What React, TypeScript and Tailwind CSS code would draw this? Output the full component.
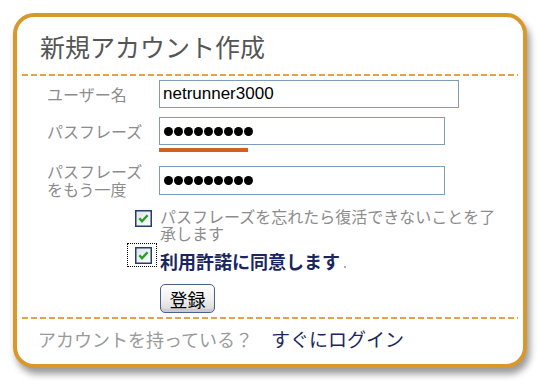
import React from "react";

const Check: React.FC = () => (
  <svg width="17" height="17" viewBox="0 0 17 17" className="block">
    <defs>
      <linearGradient id="cbg" x1="0" y1="0" x2="1" y2="1">
        <stop offset="0" stopColor="#dfe3e8" />
        <stop offset="1" stopColor="#ffffff" />
      </linearGradient>
    </defs>
    <rect x="0.75" y="0.75" width="15.5" height="15.5" fill="url(#cbg)" stroke="#1f3f70" strokeWidth="1.5" />
    <path d="M4.3 8.2 L7 11.2 L12.6 5.2" stroke="#23a127" strokeWidth="2.4" fill="none" />
  </svg>
);

const Dots: React.FC = () => (
  <div className="flex items-center gap-[1px] pl-[4px]">
    {Array.from({ length: 9 }).map((_, i) => (
      <span key={i} className="block w-[9px] h-[9px] rounded-full bg-black" />
    ))}
  </div>
);

const Dash: React.FC = () => (
  <div className="mx-[5px] h-[2px] bg-[repeating-linear-gradient(90deg,#e3a445_0_6px,transparent_6px_9px)]" />
);

const App: React.FC = () => {
  return (
    <div className="w-[540px] h-[387px] bg-white pl-[13px] pt-[13px] font-[Noto_Sans_CJK_JP,sans-serif]">
      <div className="w-[514px] h-[355px] border-4 border-[#d9982c] rounded-[21px] bg-white shadow-[3px_6px_7px_rgba(0,0,0,0.4)] flex flex-col">
        {/* title */}
        <div className="h-[57px] pl-[23px] pt-[12px] text-[25px] leading-[34px] text-[#555]">
          新規アカウント作成
        </div>
        <Dash />

        {/* user name */}
        <div className="mt-[4px] flex items-center">
          <div className="w-[142px] pl-[30px] text-[16px] leading-[18px] text-[#8c8c8c]">ユーザー名</div>
          <div className="w-[300px] h-[28px] border border-[#7f9db9] flex items-center pl-[3px] font-[Liberation_Sans,Arial,sans-serif] text-[17px] text-black">
            netrunner3000
          </div>
        </div>

        {/* passphrase */}
        <div className="mt-[9px] flex items-center">
          <div className="w-[142px] pl-[30px] text-[16px] leading-[18px] text-[#8c8c8c]">パスフレーズ</div>
          <div className="w-[286px] h-[28px] border border-[#7f9db9] flex items-center">
            <Dots />
          </div>
        </div>
        <div className="ml-[142px] mt-[3px] w-[89px] h-[4px] bg-[#d2601e]" />

        {/* passphrase again */}
        <div className="mt-[10px] flex items-center">
          <div className="w-[142px] pl-[30px] text-[16px] leading-[18px] text-[#8c8c8c]">
            パスフレーズ
            <br />
            をもう一度
          </div>
          <div className="w-[286px] h-[29px] border border-[#7f9db9] flex items-center">
            <Dots />
          </div>
        </div>

        {/* acknowledge */}
        <div className="mt-[10px] flex items-start">
          <div className="ml-[118px] mt-[2px]">
            <Check />
          </div>
          <div className="ml-[8px] w-[345px] text-[16px] leading-[17px] text-[#8c8c8c]">
            パスフレーズを忘れたら復活できないことを了承します
          </div>
        </div>

        {/* license */}
        <div className="mt-[1px] flex items-start">
          <div className="ml-[110px] w-[30px] h-[24px] border border-dotted border-black flex items-center pl-[7px]">
            <Check />
          </div>
          <div className="ml-[3px] mt-[6px] text-[18px] leading-[24px] font-bold text-[#1b2660] flex items-end">
            利用許諾に同意します
            <span className="ml-[4px] mb-[5px] block w-[2px] h-[2px] bg-[#b0b0b0]" />
          </div>
        </div>

        {/* submit */}
        <div className="mt-[11px] ml-[143px]">
          <button className="w-[55px] h-[29px] rounded-[5px] border border-[#4a6181] bg-gradient-to-b from-[#ffffff] via-[#f1f1f1] to-[#d6d6d6] shadow-[inset_0_-3px_0_#c9ccd2] text-[18px] leading-[24px] text-black flex items-center justify-center">
            登録
          </button>
        </div>

        <div className="mt-[4px]">
          <Dash />
        </div>

        {/* footer */}
        <div className="mt-[8px] pl-[21px] flex items-center h-[24px]">
          <span className="text-[18px] leading-[24px] text-[#9a9a9a]">アカウントを持っている？</span>
          <span className="ml-[18px] text-[19px] leading-[24px] text-[#1b2660]">すぐにログイン</span>
        </div>
      </div>
    </div>
  );
};

export default App;
